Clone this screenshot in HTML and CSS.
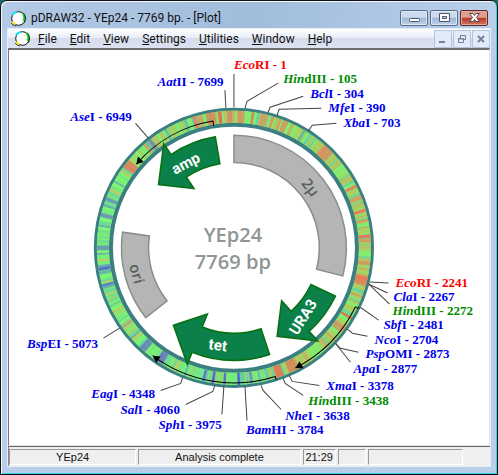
FILE: index.html
```html
<!DOCTYPE html>
<html lang="en">
<head>
<meta charset="utf-8">
<title>pDRAW32 - YEp24 - 7769 bp. - [Plot]</title>
<link rel="stylesheet" href="styles.css">
</head>
<body>
<svg width="0" height="0" class="defs" aria-hidden="true">
  <symbol id="logo" viewBox="0 0 17 17">
    <circle cx="8.500" cy="8.500" r="6.800" fill="#fff" stroke="#111" stroke-width="1"/>
    <path d="M2 5L4 3L7 2" fill="none" stroke="#16e4f4" stroke-width="2"/>
    <path d="M12.500 3Q15.500 7 13.500 11" fill="none" stroke="#11dc22" stroke-width="2"/>
    <path d="M13.500 3Q17 8 14 13" fill="none" stroke="#111" stroke-width="0.800"/>
    <path d="M2 12L5.500 14.500" fill="none" stroke="#f4e61a" stroke-width="2"/>
    <path d="M1 13L3 15L6 16" fill="none" stroke="#222" stroke-width="0.800"/>
  </symbol>
</svg>
<div class="window">
  <header class="titlebar">
    <svg class="logo"><use href="#logo"/></svg>
    <h1 class="title">pDRAW32 - YEp24 - 7769 bp. - [Plot]</h1>
    <div class="captions">
      <button class="caption" aria-label="Minimize"><svg viewBox="0 0 26 14"><rect x="8.500" y="7.500" width="10" height="3" rx="1" fill="#fff" stroke="#4b5568"/></svg></button>
      <button class="caption" aria-label="Maximize"><svg viewBox="0 0 26 14"><path d="M8.500 2.500h10v8h-10zM11.500 5.500h4v2h-4z" fill="#fff" fill-rule="evenodd" stroke="#4b5568"/></svg></button>
      <button class="caption caption-close" aria-label="Close"><svg viewBox="0 0 26 14"><path d="M8.500 2.500h3.500l1.500 2l1.500-2h3.500l-3 4l3 4h-3.500l-1.500-2l-1.500 2h-3.500l3-4z" fill="#fff" stroke="#5b4450"/></svg></button>
    </div>
  </header>
  <div class="client">
    <nav class="menubar">
      <svg class="logo"><use href="#logo"/></svg>
      <a class="menu" href="#file"><u>F</u>ile</a>
      <a class="menu" href="#edit"><u>E</u>dit</a>
      <a class="menu" href="#view"><u>V</u>iew</a>
      <a class="menu" href="#settings"><u>S</u>ettings</a>
      <a class="menu" href="#utilities"><u>U</u>tilities</a>
      <a class="menu" href="#window"><u>W</u>indow</a>
      <a class="menu" href="#help"><u>H</u>elp</a>
      <div class="mdi">
        <button class="mdi-button" aria-label="Minimize plot"><svg viewBox="0 0 16 16"><path d="M4 11h6" stroke="#6f8299" stroke-width="2"/></svg></button>
        <button class="mdi-button" aria-label="Restore plot"><svg viewBox="0 0 16 16"><path d="M6.500 7V4.500h5v4H10M4.500 7.500h5v4h-5zM6 4.500h6M4 8h6" fill="none" stroke="#6f8299"/></svg></button>
        <button class="mdi-button" aria-label="Close plot"><svg viewBox="0 0 16 16"><path d="M5 5l6 6M11 5l-6 6" stroke="#6f8299" stroke-width="2"/></svg></button>
      </div>
    </nav>
    <main class="view">
      <svg id="plot" class="plot" viewBox="10 50 478 393" role="img" aria-label="YEp24 plasmid map"></svg>
    </main>
    <footer class="status">
      <div class="cell">YEp24</div>
      <div class="cell">Analysis complete</div>
      <div class="cell">21:29</div>
      <div class="cell"></div>
      <div class="cell"></div>
    </footer>
  </div>
</div>
<script src="plot.js"></script>
</body>
</html>
```
FILE: styles.css
```css
* { box-sizing: border-box; }
body {
  margin: 0;
  background: #1b6a6c;
  font-family: Roboto, "Liberation Sans", sans-serif;
  font-size: 12px;
  color: #111;
}
.defs { position: absolute; }
.window {
  display: flex;
  flex-direction: column;
  min-height: 100vh;
  padding: 1px 6px 7px;
  border: 1px solid #111;
  border-radius: 7px 7px 0 0;
  background: linear-gradient(100deg, #b4cae6 0, #a0bddc 50%, #b9cfea 100%) top / 100% 30px no-repeat, #b9cfe9;
  box-shadow: inset 1px 1px #f2f8fd, inset -1px -1px #2fd2ea;
}
.titlebar { display: flex; align-items: center; height: 26px; padding: 6px 3px 0 3px; }
.logo { width: 17px; height: 17px; flex: none; }
.title { flex: 1; margin: 0 0 0 4px; font-size: 12px; font-weight: 400; line-height: 18px; white-space: nowrap; }
.captions { display: flex; gap: 2px; }
.caption {
  width: 28px;
  height: 16px;
  padding: 0;
  border: 1px solid #596c87;
  border-radius: 2px;
  background: linear-gradient(#cbdbed 45%, #9db6d4 50%, #bdd1e8);
  box-shadow: inset 0 0 0 1px #dce8f4;
}
.caption svg, .mdi-button svg { display: block; width: 100%; height: 100%; }
.caption-close {
  border-color: #5a2a2e;
  background: linear-gradient(#e0a08f 45%, #b93627 50%, #d07a5c);
  box-shadow: inset 0 0 0 1px #e5a79a;
}
.client { flex: 1; display: flex; flex-direction: column; border: 1px solid #e6eef7; }
.menubar {
  display: flex;
  align-items: center;
  height: 19px;
  padding-left: 6px;
  background: linear-gradient(#fff, #e9edf7 45%, #d7dcec 50%, #dde2f2);
}
.menu { margin-left: 13px; color: #111; text-decoration: none; line-height: 18px; }
.menu:first-of-type { margin-left: 7px; }
.mdi { display: flex; gap: 1px; margin-left: auto; }
.mdi-button { width: 18px; height: 18px; padding: 0; border: 1px solid #b3c5db; background: #e1ecf8; }
.view {
  flex: 1;
  background: #fff;
  border: 1px solid #e3e3e3;
  border-top: 2px solid #6c6c6c;
  border-left: 1px solid #777;
}
.plot { display: block; width: 100%; height: auto; }
.plot text { font-family: "Liberation Serif", serif; font-size: 13px; font-weight: 700; }
.plot .name { font-style: italic; }
.plot .once { fill: #f00; }
.plot .twice { fill: #008c00; }
.plot .site { fill: #00e; }
.plot .caption-text { font-family: "Open Sans", sans-serif; font-size: 20px; font-weight: 600; fill: #8f9693; text-anchor: middle; }
.plot .gene { font-family: Roboto, "Liberation Sans", sans-serif; font-size: 15px; fill: #fff; text-anchor: middle; }
.plot .region { font-family: "Open Sans", sans-serif; font-size: 15px; font-weight: 600; fill: #56605a; text-anchor: middle; }
.peak { opacity: 0.8; }
.leader { fill: none; stroke: #444; }
.orf { fill: none; stroke: #000; stroke-width: 1; }
.status {
  display: grid;
  grid-template-columns: 127fr 162fr 33fr 28fr 95fr 25fr;
  gap: 2px;
  height: 20px;
  padding: 2px 0 1px;
  border-top: 1px solid #666;
  border-left: 1px solid #888;
  background: #efefef;
  font-family: "Liberation Sans", sans-serif;
  font-size: 11px;
}
.cell {
  border: 1px solid #fff;
  border-top-color: #999;
  border-left-color: #999;
  text-align: center;
  line-height: 14px;
  white-space: nowrap;
}
```
FILE: plot.js
```js
const plot = document.getElementById("plot");
const CX = 234, CY = 247;

function add(tag, attrs, text) {
  const el = document.createElementNS("http://www.w3.org/2000/svg", tag);
  for (const key in attrs) el.setAttribute(key, attrs[key]);
  if (text) el.textContent = text;
  plot.appendChild(el);
  return el;
}

// Angles are in degrees, clockwise from the top of the plasmid.
function at(r, deg) {
  const a = deg * Math.PI / 180;
  return (CX + r * Math.sin(a)).toFixed(1) + " " + (CY - r * Math.cos(a)).toFixed(1);
}
function arc(r, from, to) {
  const large = Math.abs(to - from) > 180 ? 1 : 0;
  return `A${r} ${r} 0 ${large} ${to > from ? 1 : 0} ${at(r, to)}`;
}
function band(r1, r2, from, to) {
  return `M${at(r1, from)}${arc(r1, from, to)}L${at(r2, to)}${arc(r2, to, from)}Z`;
}
function ring(r, width, color) {
  add("circle", { cx: CX, cy: CY, r, fill: "none", stroke: color, "stroke-width": width });
}

// Base composition ring.
ring(130, 19, "#3c7f83");
ring(130.5, 12, "#80f577");
let seed = 41;
function random() {
  seed = (seed * 16807) % 2147483647;
  return seed / 2147483647;
}
const palettes = [
  [0, 165, ["#a9cc60", "#c3af65", "#80ee70", "#98dc6a", "#b8c25f", "#6dd498", "#a8d362", "#d09c62"]],
  [165, 205, ["#6bc7a4", "#70e88b", "#6f9bc0", "#77ed78", "#8adb75"]],
  [205, 315, ["#78f076", "#6cda98", "#75ef7a", "#69afb0", "#b6ce63", "#7ff574", "#72dc90", "#7be77a"]],
  [315, 360, ["#9fd065", "#7bec72", "#c2a66a", "#82ed73", "#68bfa8", "#bdc064"]]
];
for (const [from, to, colors] of palettes) {
  let a = from;
  while (a < to) {
    const b = Math.min(to, a + 0.4 + random() * 1.2);
    add("path", { d: band(124.5, 136.5, a, b), fill: colors[Math.floor(random() * colors.length)] });
    a = b;
  }
}
const peaks = [
  [8, 1, "#f66b55"], [3, 3, "#d39565"], [13, 3, "#cc9d66"], [31, 1, "#64aaa0"], [44, 5, "#df8b5e"],
  [63, 1, "#f06e58"], [74, 1, "#f56958"], [85, 1.5, "#f56755"], [104, 3, "#f36e54"], [121, 1, "#ff4d40"],
  [127, 3, "#c89b61"], [154, 4, "#dc7e56"], [160, 3, "#f36353"], [178, 1, "#4747dd"], [184, 1, "#5654dd"],
  [189, 1, "#5454dd"], [193, 1, "#5a5adf"], [213, 3, "#626dcc"], [222, 3, "#6477c0"], [235, 1, "#d3b45b"],
  [254, 1, "#5366dc"], [261, 1.5, "#4c58e0"], [270, 2, "#6888c0"], [284, 1.5, "#6289c4"], [291, 1.5, "#5f8fc0"],
  [308, 4, "#ef735a"], [322, 1.5, "#6088bc"], [343, 1, "#f07060"], [350, 4, "#d88460"], [354, 1.5, "#ff5058"], [358, 2, "#d88760"]
];
for (const [a, w, color] of peaks) {
  add("path", { class: "peak", d: band(124.5, 136.5, a - w / 2, a + w / 2), fill: color });
}

// Plain regions.
for (const [from, to] of [[0, 104.5], [231.6, 278]]) {
  add("path", { d: band(112, 85, from, to), fill: "#b5b5b5", stroke: "#8b8f8c", "stroke-width": 1.500 });
}

// Genes: start of the body, base of the head, tip.
for (const [start, base, tip] of [[350.5, 326, 310], [115.5, 138, 154], [161.5, 201.8, 218]]) {
  const d = `M${at(112, start)}${arc(112, start, base)}L${at(125, base)}L${at(98, tip)}` +
    `L${at(71, base)}L${at(85, base)}${arc(85, base, start)}Z`;
  add("path", { d, fill: "#0b8048", stroke: "#087010", "stroke-width": 1.500 });
}

// Open reading frames.
for (const [r, tick, from, to] of [[128, 123, 350.6, 310.6], [134.5, 138, 116, 153], [134.5, 138, 162.2, 217]]) {
  const dir = Math.sign(to - from);
  add("path", { class: "orf", d: `M${at(tick, from)}L${at(r, from)}${arc(r, from, to)}` });
  add("path", { d: `M${at(r, to)}L${at(r - 4, to - dir * 3)}L${at(r + 4, to - dir * 3)}Z` });
}

// Restriction sites: enzyme name, rest of the label, class, text position, leader.
const sites = [
  ["Eco", "RI - 1", "once", 234, 69, "M234 74V107"],
  ["Hin", "dIII - 105", "twice", 283, 83, "M278 83L247 101L245 108"],
  ["Bcl", "I - 304", "site", 310, 98, "M303 96L270 107L268 112"],
  ["Mfe", "I - 390", "site", 328, 112, "M321 108L279 109L277 115"],
  ["Xba", "I - 703", "site", 343, 127, "M336 123L312 125L308 131"],
  ["Eco", "RI - 2241", "once", 395, 286, "M388 282L369 281"],
  ["Cla", "I - 2267", "site", 393, 300, "M387 292L368 283"],
  ["Hin", "dIII - 2272", "twice", 392, 314, "M389 303L368 283"],
  ["Sbf", "I - 2481", "site", 383, 328, "M378 319L361 307L355 306"],
  ["Nco", "I - 2704", "site", 374, 343, "M367 335L352 332L347 328"],
  ["Psp", "OMI - 2873", "site", 365, 357, "M358 351L340 347L335 342"],
  ["Apa", "I - 2877", "site", 353, 372, "M350 361L335 342"],
  ["Xma", "I - 3378", "site", 326, 389, "M319 384L292 380L289 374"],
  ["Hin", "dIII - 3438", "twice", 308, 404, "M303 394L285 382L283 377"],
  ["Nhe", "I - 3638", "site", 285, 418, "M281 408L263 389L261 384"],
  ["Bam", "HI - 3784", "site", 246, 432, "M247 419L245 385"],
  ["Sph", "I - 3975", "site", 159, 427, "M222 413L224 385"],
  ["Sal", "I - 4060", "site", 121, 412, "M186 403L213 390L215 384"],
  ["Eag", "I - 4348", "site", 92, 397, "M161 389L181 382L183 376"],
  ["Bsp", "EI - 5073", "site", 28, 347, "M104 337L120 327"],
  ["Ase", "I - 6949", "site", 71, 121, "M136 123L149 138"],
  ["Aat", "II - 7699", "site", 158, 86, "M225 90L226 108"]
];
for (const [name, rest, kind, x, y, leader] of sites) {
  add("path", { class: "leader", d: leader });
  const label = add("text", { class: kind, x, y });
  const italic = add("tspan", { class: "name" }, name);
  label.append(italic, rest);
}

add("text", { class: "caption-text", x: 233, y: 241 }, "YEp24");
add("text", { class: "caption-text", x: 233, y: 268 }, "7769 bp");

function turned(cls, text, x, y, deg) {
  add("text", { class: cls, x, y, dy: 5, transform: `rotate(${deg} ${x} ${y})` }, text);
}
turned("gene", "amp", 186, 163, -28);
turned("gene", "URA3", 303, 316, -58);
turned("gene", "tet", 218, 344, 8);
turned("region", "2µ", 310, 187, 52);
turned("region", "ori", 137, 273, 75);
```
